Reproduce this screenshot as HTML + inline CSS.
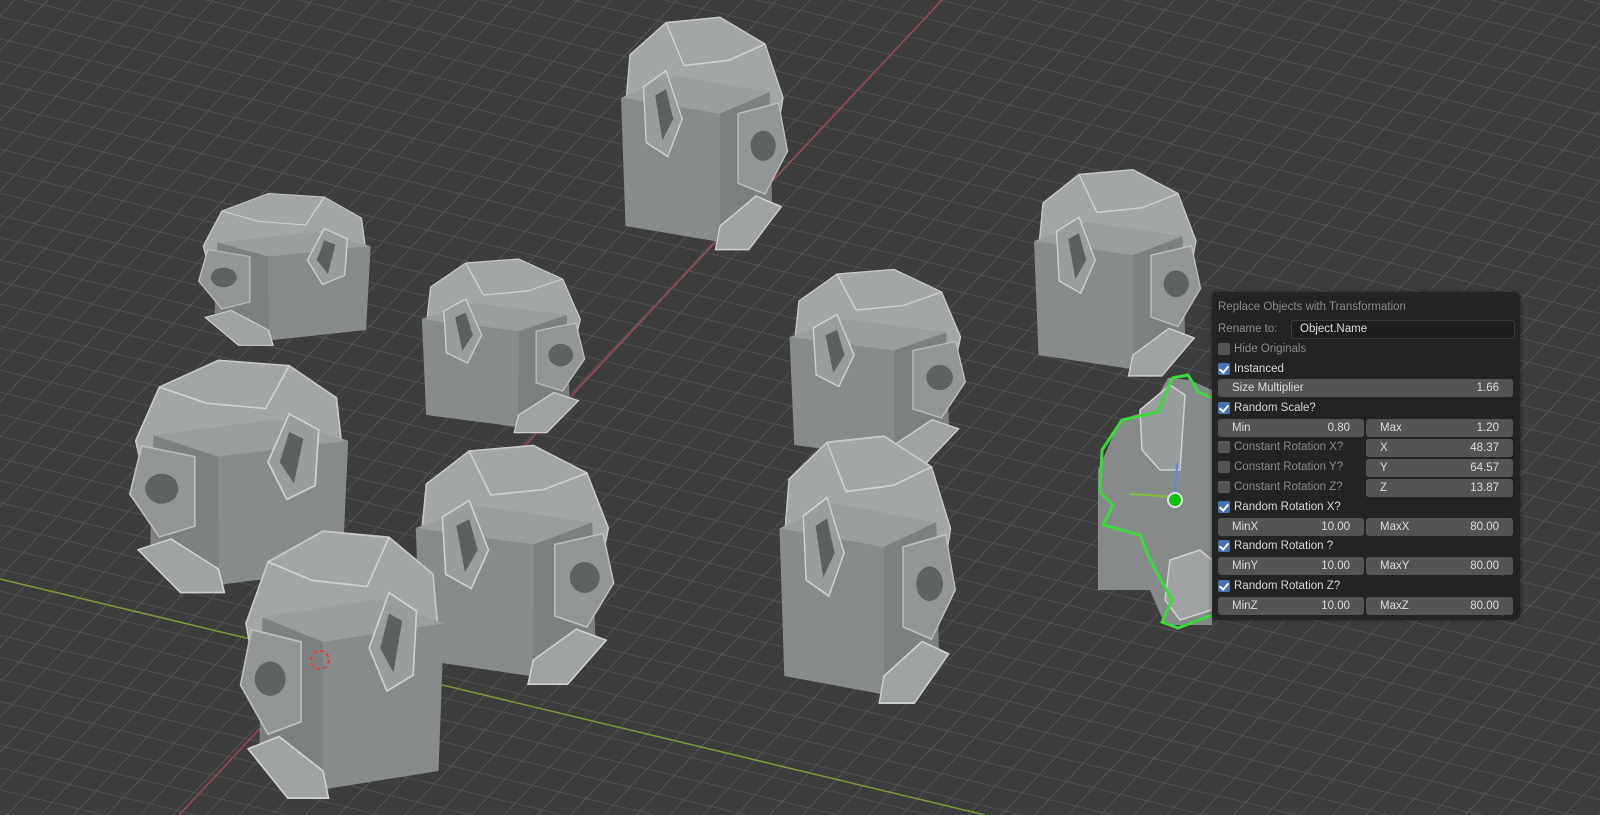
<!DOCTYPE html>
<html><head><meta charset="utf-8"><style>
html,body{margin:0;padding:0;width:1600px;height:815px;overflow:hidden;background:#3d3d3d;font-family:"Liberation Sans","DejaVu Sans",sans-serif}
svg{position:absolute;left:0;top:0}
#p{position:absolute;left:1212px;top:292px;width:308px;height:328px;background:#232323;border-radius:5px;box-shadow:0 0 4px rgba(0,0,0,.5)}
.t{position:absolute;font-size:11.5px;color:#d6d6d6;white-space:nowrap;line-height:18px}
.dim{color:#8a8a8a}
.f{position:absolute;height:18px;background:#545454;border-radius:3px;font-size:11.5px;color:#dcdcdc;line-height:18px}
.f .l{position:absolute;left:14px}.f .r{position:absolute;right:14px}
.cb{position:absolute;width:12px;height:12px;border-radius:2px;background:#545454}
.cb.on{background:#4772b3}
.cb.on:after{content:"";position:absolute;left:3px;top:1px;width:4px;height:7px;border:solid #fff;border-width:0 2px 2px 0;transform:rotate(40deg)}
</style></head><body>
<svg width="1600" height="815" viewBox="0 0 1600 815">
<defs>
<pattern id="g" width="1" height="1" patternUnits="userSpaceOnUse" patternTransform="matrix(27 6.5 -17 18 942 0)">
<rect width="1" height="1" fill="#3d3d3d"/>
<path d="M0 0H1M0 0V1" stroke="#565656" stroke-width="0.07" fill="none"/>
</pattern>
<g id="m">
<polygon points="20,40 60,10 120,5 170,30 190,80 180,130 120,150 40,130 15,90" fill="#a3a6a6" stroke="#c8c8c8" stroke-width="1.5"/>
<polyline points="60,10 80,50 130,45 170,30 M80,50 60,90" fill="none" stroke="#cfcfcf" stroke-width="1.5"/>
<polygon points="10,80 70,60 175,75 120,95" fill="#9b9e9e"/>
<polygon points="10,80 120,95 120,215 15,200" fill="#878b8b"/>
<polygon points="120,95 175,75 178,185 120,215" fill="#7c8080"/>
<polygon points="140,95 185,85 195,130 170,170 140,160" fill="#939696" stroke="#bdbdbd" stroke-width="1.5"/>
<circle cx="168" cy="125" r="14" fill="#5e6262"/>
<polygon points="35,70 60,55 78,100 62,135 38,122" fill="#9a9d9d" stroke="#d0d0d0" stroke-width="1.5"/>
<polygon points="48,78 60,72 68,100 56,120" fill="#5d6060"/>
<polygon points="120,200 160,172 188,182 152,222 115,222" fill="#a0a3a3" stroke="#cfcfcf" stroke-width="1.5"/>
</g>
</defs>
<rect width="1600" height="815" fill="url(#g)"/>
<line x1="942" y1="0" x2="179" y2="815" stroke="#9a4a52" stroke-width="1.5"/>
<line x1="0" y1="579" x2="985" y2="815" stroke="#7a9a3a" stroke-width="1.5"/>
<use href="#m" transform="translate(612,12) scale(0.9,1.07)"/>
<use href="#m" transform="translate(380,190) scale(-0.93,0.7)"/>
<use href="#m" transform="translate(413,255) scale(0.88,0.8)"/>
<use href="#m" transform="translate(780,265) scale(0.95,0.9)"/>
<use href="#m" transform="translate(1025,165) scale(0.9,0.95)"/>
<use href="#m" transform="translate(360,355) scale(-1.18,1.07)"/>
<use href="#m" transform="translate(405,440) scale(1.07,1.1)"/>
<use href="#m" transform="translate(455,525) scale(-1.1,1.23)"/>
<use href="#m" transform="translate(770,430) scale(0.95,1.23)"/>
<g>
<polygon points="1098,590 1098,470 1120,420 1150,410 1168,378 1190,380 1212,390 1212,625 1165,625 1150,590" fill="#868a8a"/>
<polygon points="1140,410 1170,385 1185,395 1180,470 1160,470 1142,450" fill="#9a9d9d" stroke="#d0d0d0" stroke-width="1.5"/>
<polygon points="1170,560 1200,550 1212,560 1212,610 1180,620 1165,600" fill="#a0a3a3" stroke="#cfcfcf" stroke-width="1.5"/>
<path d="M1172,378 L1188,375 L1198,392 L1212,398 M1172,378 L1158,412 L1122,420 L1102,450 L1100,492 L1113,505 L1103,525 L1140,535 L1150,560 L1172,600 L1162,622 L1178,628 L1212,615" fill="none" stroke="#3ed83e" stroke-width="3"/>
<line x1="1175" y1="497" x2="1130" y2="494" stroke="#7fc23a" stroke-width="2"/>
<line x1="1175" y1="497" x2="1177" y2="463" stroke="#5a8ae0" stroke-width="2"/>
<circle cx="1175" cy="500" r="7" fill="#11c111" stroke="#e0e0e0" stroke-width="2"/>
</g>
<circle cx="320" cy="660" r="9" fill="none" stroke="#e04040" stroke-width="2" stroke-dasharray="4 3"/>
</svg>
<div id="p">
<div class="t dim" style="left:6px;top:6px">Replace Objects with Transformation</div>
<div class="t dim" style="left:6px;top:28px">Rename to:</div>
<div class="f" style="left:79px;top:28px;width:222px;background:#1d1d1d;border:1px solid #3a3a3a;height:17px;line-height:17px"><span class="l" style="left:8px">Object.Name</span></div>
<div class="cb" style="left:6px;top:51px"></div><div class="t dim" style="left:22px;top:48px">Hide Originals</div>
<div class="cb on" style="left:6px;top:71px"></div><div class="t" style="left:22px;top:68px">Instanced</div>
<div class="f" style="left:6px;top:87px;width:295px"><span class="l">Size Multiplier</span><span class="r">1.66</span></div>
<div class="cb on" style="left:6px;top:110px"></div><div class="t" style="left:22px;top:107px">Random Scale?</div>
<div class="f" style="left:6px;top:127px;width:146px"><span class="l">Min</span><span class="r">0.80</span></div>
<div class="f" style="left:154px;top:127px;width:147px"><span class="l">Max</span><span class="r">1.20</span></div>
<div class="cb" style="left:6px;top:149px"></div><div class="t dim" style="left:22px;top:146px">Constant Rotation X?</div>
<div class="cb" style="left:6px;top:169px"></div><div class="t dim" style="left:22px;top:166px">Constant Rotation Y?</div>
<div class="cb" style="left:6px;top:189px"></div><div class="t dim" style="left:22px;top:186px">Constant Rotation Z?</div>
<div class="f" style="left:154px;top:147px;width:147px"><span class="l">X</span><span class="r">48.37</span></div>
<div class="f" style="left:154px;top:167px;width:147px"><span class="l">Y</span><span class="r">64.57</span></div>
<div class="f" style="left:154px;top:187px;width:147px"><span class="l">Z</span><span class="r">13.87</span></div>
<div class="cb on" style="left:6px;top:209px"></div><div class="t" style="left:22px;top:206px">Random Rotation X?</div>
<div class="f" style="left:6px;top:226px;width:146px"><span class="l">MinX</span><span class="r">10.00</span></div>
<div class="f" style="left:154px;top:226px;width:147px"><span class="l">MaxX</span><span class="r">80.00</span></div>
<div class="cb on" style="left:6px;top:248px"></div><div class="t" style="left:22px;top:245px">Random Rotation ?</div>
<div class="f" style="left:6px;top:265px;width:146px"><span class="l">MinY</span><span class="r">10.00</span></div>
<div class="f" style="left:154px;top:265px;width:147px"><span class="l">MaxY</span><span class="r">80.00</span></div>
<div class="cb on" style="left:6px;top:288px"></div><div class="t" style="left:22px;top:285px">Random Rotation Z?</div>
<div class="f" style="left:6px;top:305px;width:146px"><span class="l">MinZ</span><span class="r">10.00</span></div>
<div class="f" style="left:154px;top:305px;width:147px"><span class="l">MaxZ</span><span class="r">80.00</span></div>
</div>
</body></html>
